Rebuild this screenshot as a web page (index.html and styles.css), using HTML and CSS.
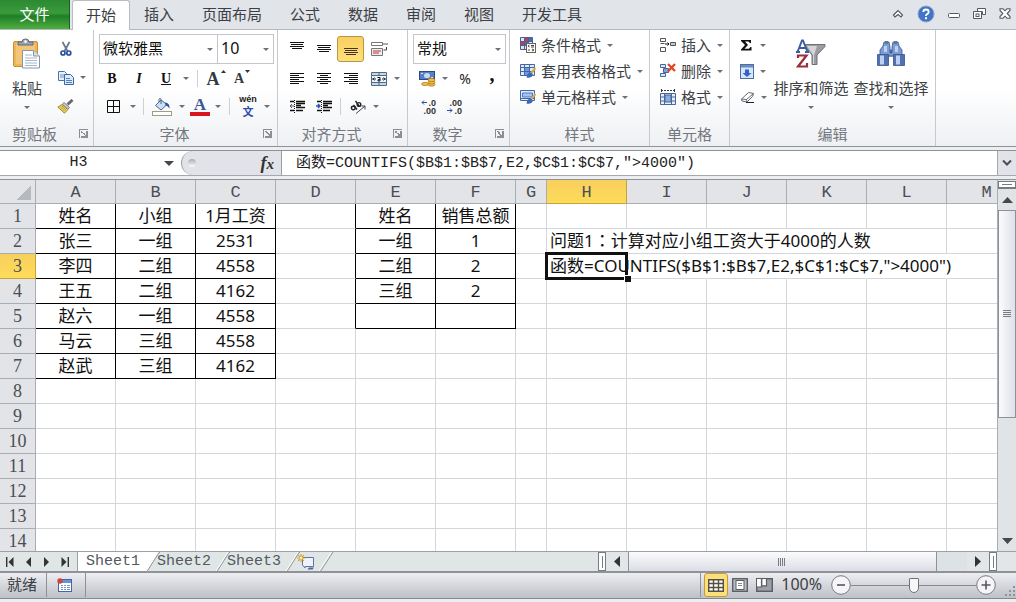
FILE: index.html
```html
<!DOCTYPE html>
<html lang="zh-CN">
<head>
<meta charset="utf-8">
<title>工作簿</title>
<link rel="stylesheet" href="styles.css">
</head>
<body>
<nav class="tabs">
  <button class="file">文件</button>
  <button class="tab active">开始</button>
  <button class="tab">插入</button>
  <button class="tab">页面布局</button>
  <button class="tab">公式</button>
  <button class="tab">数据</button>
  <button class="tab">审阅</button>
  <button class="tab">视图</button>
  <button class="tab">开发工具</button>
  <div class="window-tools">
    <button aria-label="折叠功能区"><svg width="12" height="10" viewBox="0 0 12 10"><path d="M1.500 6 6 1.500 10.500 6 9 8 6 5.500 3 8Z" fill="#fff" stroke="#555a62" stroke-width="1.200"/></svg></button>
    <button aria-label="帮助"><svg width="18" height="18" viewBox="0 0 18 18"><circle cx="9" cy="9" r="8" fill="#4474c4" stroke="#8aa5d6" stroke-width="1"/><path d="M6.300 7Q6.300 4.500 9 4.500T11.700 7Q11.700 8.500 9.800 9.300 9 9.700 9 11" fill="none" stroke="#fff" stroke-width="1.800"/><rect x="8" y="12.200" width="2" height="2" fill="#fff"/></svg></button>
    <button aria-label="最小化"><svg width="12" height="12" viewBox="0 0 12 12"><rect x=".5" y="5.500" width="11" height="4" rx="1" fill="#fff" stroke="#555a62"/></svg></button>
    <button aria-label="还原"><svg width="13" height="12" viewBox="0 0 13 12"><path d="M4.500.5h8v6h-3v-3h-5Z" fill="#fff" stroke="#555a62"/><path d="M.5 3.500h8v7h-8Z" fill="#fff" stroke="#555a62"/><rect x="3" y="6" width="3" height="2.500" fill="#fff" stroke="#555a62"/></svg></button>
    <button aria-label="关闭"><svg width="12" height="11" viewBox="0 0 12 11"><path d="M1 .8h3l2 2 2-2h3v1.700L8.200 5.500 11 8.500v1.700H8l-2-2-2 2H1V8.500l2.800-3L1 2.500Z" fill="#fff" stroke="#555a62" stroke-width="1.100"/></svg></button>
  </div>
</nav>

<section class="ribbon">
  <div class="group">
    <div class="body columns clip">
      <button class="big">
        <svg width="30" height="32" viewBox="0 0 30 32"><rect x="1.500" y="3.500" width="24" height="25" rx="1.500" fill="#eab55c" stroke="#c98f35"/><path d="M4 5h19v21H4Z" fill="#f3c577"/><path d="M6 7V4h4q0-3 3.500-3T17 4h4v3Z" fill="#9aa4b5" stroke="#5d6878"/><circle cx="13.500" cy="3.600" r="1.300" fill="#fff"/><path d="M10.500 12.500h11l6 5.500v12h-17Z" fill="#fff" stroke="#8795ab"/><path d="M21.500 12.500V18h6" fill="#d6dfed" stroke="#8795ab"/><path d="M13 17h7M13 20h12M13 22.500h12M13 25h12M13 27.500h12" stroke="#a9b6c9"/></svg>
        <span>粘贴</span><i class="arrow"></i>
      </button>
      <div class="stack">
        <button class="icon" aria-label="剪切"><svg width="12" height="16" viewBox="0 0 12 16"><path d="M2.500 1 7.500 10M9.500 1 4.500 10" stroke="#61788f" stroke-width="1.700"/><circle cx="3" cy="12" r="2" fill="none" stroke="#2a4fa0" stroke-width="1.700"/><circle cx="8.800" cy="12" r="2" fill="none" stroke="#2a4fa0" stroke-width="1.700"/></svg></button>
        <button class="icon" aria-label="复制"><svg width="16" height="14" viewBox="0 0 16 14"><path d="M.5.5h6l2 2v7h-8Z" fill="#e7f0fb" stroke="#4e74ad"/><path d="M2 4h4M2 6h4" stroke="#6a92cc"/><path d="M6.500 3.500h6l3 3v7h-9Z" fill="#dceafa" stroke="#3c64a3"/><path d="M8 7.500h4M8 9.500h6M8 11.500h6" stroke="#4e7fc5"/></svg></button>
        <button class="icon" aria-label="格式刷"><svg width="17" height="15" viewBox="0 0 17 15"><path d="m15.500 1-5 4.500" stroke="#6c6670" stroke-width="3"/><path d="m7 3.500 5.500 5-1.700 1.700-5.500-5Z" fill="#c9ced6" stroke="#596274" stroke-width=".8"/><path d="M5 5.500.8 8l6.700 6.200L11 10.500Z" fill="#e8d267" stroke="#a58a2a"/><path d="m3.500 8 4 4M5 7l4 4" stroke="#a58a2a" stroke-width=".7"/></svg></button>
      </div>
      <i class="arrow"></i>
    </div>
    <footer>剪贴板<button class="launcher" aria-label="剪贴板选项"></button></footer>
  </div>

  <div class="group">
    <div class="body rows">
      <div class="line tall">
        <span class="combo font-name"><select aria-label="字体"><option>微软雅黑</option></select></span>
        <span class="combo font-size"><select aria-label="字号"><option>10</option></select></span>
      </div>
      <div class="line">
        <button class="w26 letter"><b>B</b></button>
        <button class="w28 letter"><em>I</em></button>
        <button class="w26 letter"><u>U</u></button>
        <i class="arrow w14"></i><i class="sep w8"></i>
        <button class="w30 grow"><span>A</span><svg width="5" height="4" viewBox="0 0 5 4"><path d="M0 3 2.500 0 5 3Z" fill="#334"/></svg></button>
        <button class="w22 grow small"><span>A</span><svg width="5" height="4" viewBox="0 0 5 4"><path d="M0 0h5L2.500 3Z" fill="#334"/></svg></button>
      </div>
      <div class="line">
        <button class="w28" aria-label="边框"><svg width="13" height="13" viewBox="0 0 13 13"><path d="M.5.5h12v12H.5ZM6.500 0v13M0 6.500h13" fill="none" stroke="#111"/></svg></button>
        <i class="arrow w12"></i><i class="sep w8"></i>
        <button class="w30" aria-label="填充颜色"><svg width="20" height="18" viewBox="0 0 20 18"><path d="M9 2 3.500 7.500 9 12l6-5.500Z" fill="#cfdff2" stroke="#46648f"/><path d="M9 6V1.500Q9 .5 8 .5T7 1.500V4" fill="none" stroke="#46648f"/><path d="M13 4.500q5 .5 4.500 6-2-3-4-3Z" fill="#2854a5"/><rect x=".5" y="13.500" width="19" height="4" fill="#fff" stroke="#a09c80"/></svg></button>
        <i class="arrow w10"></i>
        <button class="w26 color-a" aria-label="字体颜色"><span>A</span></button>
        <i class="arrow w10"></i><i class="sep w12"></i>
        <button class="w26 pinyin"><span>wén</span><span>文</span></button>
        <i class="arrow w12"></i>
      </div>
    </div>
    <footer>字体<button class="launcher" aria-label="字体选项"></button></footer>
  </div>

  <div class="group">
    <div class="body rows align">
      <div class="line tall">
        <button class="w27" aria-label="顶端对齐"><svg width="14" height="14" viewBox="0 0 14 14"><path d="M0 .5h14M1 2.500h12M0 4.500h14M2 6.500h10" stroke="#111"/></svg></button>
        <button class="w27" aria-label="垂直居中"><svg width="14" height="14" viewBox="0 0 14 14"><path d="M0 3.500h14M1 5.500h12M0 7.500h14M2 9.500h10" stroke="#111"/></svg></button>
        <button class="w27 pressed" aria-label="底端对齐"><svg width="14" height="14" viewBox="0 0 14 14"><path d="M0 6.500h14M1 8.500h12M0 10.500h14M2 12.500h10" stroke="#432"/></svg></button>
        <button class="w30" aria-label="自动换行"><svg width="17" height="16" viewBox="0 0 17 16"><path d="M.5 1.500h11v3H.5Z" fill="#fff" stroke="#777"/><path d="M12 3h5" stroke="#555"/><path d="M.5 7.500h11v7H.5Z" fill="#eee" stroke="#777"/><path d="M2 10h8M2 12h6" stroke="#b33"/><path d="M15.500 6v3h-3" fill="none" stroke="#345"/></svg></button>
      </div>
      <div class="line">
        <button class="w27" aria-label="左对齐"><svg width="14" height="12" viewBox="0 0 14 12"><path d="M0 .5h14M0 2.500h9M0 4.500h14M0 6.500h9M0 8.500h14M0 10.500h9" stroke="#111"/></svg></button>
        <button class="w27" aria-label="居中"><svg width="14" height="12" viewBox="0 0 14 12"><path d="M0 .5h14M3 2.500h8M0 4.500h14M3 6.500h8M0 8.500h14M3 10.500h8" stroke="#111"/></svg></button>
        <button class="w27" aria-label="右对齐"><svg width="14" height="12" viewBox="0 0 14 12"><path d="M0 .5h14M5 2.500h9M0 4.500h14M5 6.500h9M0 8.500h14M5 10.500h9" stroke="#111"/></svg></button>
        <button class="w30" aria-label="合并后居中"><svg width="16" height="14" viewBox="0 0 16 14"><path d="M.5.5h15v13H.5ZM8 0v3.500M8 10.500V14" fill="#c8d7e6" stroke="#4f6b84"/><path d="M.5 3.500h15v7H.5Z" fill="#eef5fc" stroke="#4f6b84"/><path d="M1 7h4M3.500 5.500 2 7l1.500 1.500M15 7h-4M12.500 5.500 14 7l-1.500 1.500" fill="none" stroke="#234"/><path d="M6.500 5.500h2.500v3.500H7q-1-1.500 2-1.700" fill="none" stroke="#111"/></svg></button>
        <i class="arrow w6"></i>
      </div>
      <div class="line">
        <button class="w27" aria-label="减少缩进"><svg width="16" height="13" viewBox="0 0 16 13"><path d="M1 1.500h4M7 1.500h9M7 3.500h9M7 5.500h5M7 7.500h9M1 10.500h4M7 10.500h7" stroke="#111" stroke-width="1.300"/><path d="M5.500 0v13" stroke="#111" stroke-dasharray="1 1"/><path d="M5 6H1M3 4 1 6l2 2" fill="none" stroke="#557"/></svg></button>
        <button class="w27" aria-label="增加缩进"><svg width="16" height="13" viewBox="0 0 16 13"><path d="M1 1.500h4M7 1.500h9M7 3.500h9M7 5.500h5M7 7.500h9M1 10.500h4M7 10.500h7" stroke="#111" stroke-width="1.300"/><path d="M5.500 0v13" stroke="#111" stroke-dasharray="1 1"/><path d="M0 6h4M2 4l2 2-2 2" fill="none" stroke="#2a50c0" stroke-width="1.400"/></svg></button>
        <i class="sep w6"></i>
        <button class="w30" aria-label="方向"><svg width="16" height="14" viewBox="0 0 16 14"><path d="M6 13.500 15 6M11.500 6H15v3.500" fill="none" stroke="#445"/><g fill="none" stroke="#222" stroke-width="1.400"><ellipse cx="3.300" cy="8" rx="1.900" ry="1.700"/><path d="m3.500 5 3.500 4.500M5.500 1l4 5.500"/><ellipse cx="9" cy="4.500" rx="1.800" ry="1.900"/></g></svg></button>
        <i class="arrow w6"></i>
      </div>
    </div>
    <footer>对齐方式<button class="launcher" aria-label="对齐选项"></button></footer>
  </div>

  <div class="group">
    <div class="body rows">
      <div class="line tall"><span class="combo number-format"><select aria-label="数字格式"><option>常规</option></select></span></div>
      <div class="line">
        <button class="w28" aria-label="会计数字格式"><svg width="17" height="16" viewBox="0 0 17 16"><rect x=".5" y=".5" width="15" height="8" fill="#5580c4" stroke="#2c4b86"/><ellipse cx="8" cy="4.500" rx="3" ry="2.600" fill="#c7d9f3"/><path d="M2 2.500h2M12 6.500h2" stroke="#dce8fa"/><g fill="#f2bd3e" stroke="#a8741c" stroke-width=".7"><ellipse cx="6" cy="13" rx="3.500" ry="1.600"/><ellipse cx="12.500" cy="13.500" rx="3.500" ry="1.700"/><ellipse cx="12.500" cy="11.300" rx="3.500" ry="1.700"/><ellipse cx="12.500" cy="9" rx="3.500" ry="1.700"/></g></svg></button>
        <i class="arrow w8"></i>
        <button class="w32 percent">%</button>
        <button class="w22 comma">,</button>
      </div>
      <div class="line">
        <button class="w28 decimals"><span><svg width="6" height="5" viewBox="0 0 6 5"><path d="M6 2.500H1M3 .5l-2 2 2 2" fill="none" stroke="#2b4fa3"/></svg>.0</span><span>.00</span></button>
        <button class="w26 decimals"><span>.00</span><span><svg width="6" height="5" viewBox="0 0 6 5"><path d="M0 2.500h5M3 .5l2 2-2 2" fill="none" stroke="#2b4fa3"/></svg>.0</span></button>
      </div>
    </div>
    <footer>数字<button class="launcher" aria-label="数字选项"></button></footer>
  </div>

  <div class="group plain">
    <div class="body list">
      <button><svg width="16" height="16" viewBox="0 0 16 16"><path d="M.5.5h12v12H.5ZM.5 4.500h12M.5 8.500h12M4.500.5v12M8.500.5v12" fill="#dfe6f3" stroke="#4d5f8c"/><path d="M5 1h3v3H5ZM1 5h3v3H1Z" fill="#b8405a"/><path d="M9 1h3v3H9ZM5 5h3v3H5Z" fill="#4a69b8"/><rect x="6.500" y="6.500" width="9" height="9" fill="#fff" stroke="#665"/><path d="m9.500 8-1.500 1 1.500 1M11 8.500h3M11 10h3M8 13h2M12 12l2 1-2 1" fill="none" stroke="#444"/></svg>条件格式<i class="arrow"></i></button>
      <button><svg width="16" height="16" viewBox="0 0 16 16"><path d="M.5 1.500h14v11H.5Z" fill="#dfeaf9" stroke="#4566a2"/><path d="M5 5h5v7H5Z" fill="#6a9be0"/><path d="M.5 4.500h14M.5 8.500h14M4.500 1v12M9.500 1v12" stroke="#4566a2"/><path d="m15.500 5-5 6" stroke="#e0a73c" stroke-width="2"/><path d="M11 9.500q-4 0-4.500 5 5 1 6.500-3Z" fill="#3868bc"/></svg>套用表格格式<i class="arrow"></i></button>
      <button><svg width="16" height="16" viewBox="0 0 16 16"><path d="M.5 1.500h14v10H.5Z" fill="#dfeaf9" stroke="#4566a2"/><path d="M2.500 4h10v4h-10Z" fill="#a7c4ef" stroke="#4978c4"/><path d="M.5 9.500h14" stroke="#4566a2"/><path d="m15.500 5-5 6" stroke="#e0a73c" stroke-width="2"/><path d="M11 9.500q-4 0-4.500 5 5 1 6.500-3Z" fill="#3868bc"/></svg>单元格样式<i class="arrow"></i></button>
    </div>
    <footer>样式</footer>
  </div>

  <div class="group plain">
    <div class="body list">
      <button><svg width="16" height="16" viewBox="0 0 16 16"><g fill="#fff" stroke="#555"><path d="M.5 1.500h5v3h-5ZM.5 10.500h5v4h-5ZM.5 6.500h4"/><path d="M10.500 5.500h5v3h-5Z" fill="#bcd"/></g><path d="M5 7h4M7.500 5.500 9 7 7.500 8.500" fill="none" stroke="#111"/></svg>插入<i class="arrow"></i></button>
      <button><svg width="16" height="16" viewBox="0 0 16 16"><g fill="#dbe7f8" stroke="#46679e"><path d="M.5 1.500h5v3h-5ZM.5 10.500h5v3h-5Z"/><path d="M3.500 5.500h5v4h-5Z" fill="#7fa5dc"/></g><path d="m8 1 7 7M15 1 8 8.500" stroke="#e04324" stroke-width="2.200"/></svg>删除<i class="arrow"></i></button>
      <button><svg width="16" height="16" viewBox="0 0 16 16"><path d="M.5 4.500h15v11H.5ZM.5 8h15M.5 12h15M4.500 4v12M11.500 4v12" fill="#e8eef8" stroke="#4b6697"/><path d="M5 6h6v7H5Z" fill="#87ade3" stroke="#4b6697"/><path d="M1 1.500h14" stroke="#333" stroke-dasharray="2 1"/><path d="M1.500 0v3M14.500 0v3" stroke="#333"/></svg>格式<i class="arrow"></i></button>
    </div>
    <footer>单元格</footer>
  </div>

  <div class="group plain">
    <div class="body columns editing">
      <div class="list edit-list">
        <button aria-label="自动求和"><svg width="14" height="14" viewBox="0 0 14 14"><path d="M1 2h10v3h-1L8.500 3.500H5L8 7l-3.500 3.700H9L10.500 9h1v3.500H1v-1L5 7 1 3Z" fill="#111"/></svg><i class="arrow"></i></button>
        <button aria-label="填充"><svg width="14" height="15" viewBox="0 0 14 15"><rect x=".5" y=".5" width="13" height="14" fill="#d8e5f7" stroke="#4e6f9f"/><path d="M1 1h12v2.500H1Z" fill="#6a8cc0"/><path d="M5 5.500h4v3.500h2.500L7 13 2.500 9H5Z" fill="#2f63c9"/></svg><i class="arrow"></i></button>
        <button aria-label="清除"><svg width="15" height="13" viewBox="0 0 15 13"><path d="m8.500 1.500 5 1-1 3-5.500 5.500-5-1L1.500 8Z" fill="#fff" stroke="#667"/><path d="m1.500 8 5 .5 7-6M6.500 8.500l.5 2.500" fill="none" stroke="#667"/><path d="M6 11.500h8" stroke="#223"/></svg><i class="arrow"></i></button>
      </div>
      <button class="big wide">
        <svg width="30" height="32" viewBox="0 0 30 32"><path d="M9.500 6.500h19.500v2L21 17v9.500h-5V17L9.500 9Z" fill="#9a9da1" stroke="#6d7074"/><path d="M11 8h10l-3 9v9h-1v-9Z" fill="#d4d6d8"/><path d="M1.500 14 6 2.500h1L11.500 14M3 10h7M0 14h4M9 14h4" fill="none" stroke="#3b5ca4" stroke-width="1.900"/><path d="M2 20v-2.500h8.500L2 28.500h9V25" fill="none" stroke="#9b2d3c" stroke-width="2.200"/></svg>
        <span>排序和筛选</span><i class="arrow"></i>
      </button>
      <button class="big wide">
        <svg width="30" height="32" viewBox="0 0 30 32"><g stroke="#3b5384" stroke-width=".8"><path d="M12 12h6v6h-6Z" fill="#5a78b4"/><path d="M8 4h5l1 5v6h2V9l1-5h5l1 4 3 4v6H4v-6l3-4Z" fill="#7c9cd6"/><path d="M1.500 16.500h11v11h-11ZM17.500 16.500h11v11h-11Z" fill="#4f72b4"/></g><path d="M9 3h3v3H9ZM18 3h3v3h-3Z" fill="#60779f"/><path d="M4 17.500h4v9H4ZM20 17.500h4v9h-4ZM8 8h3v6H8ZM19 8h3v6h-3Z" fill="#bdd0f2"/></svg>
        <span>查找和选择</span><i class="arrow"></i>
      </button>
    </div>
    <footer>编辑</footer>
  </div>
</section>

<section class="formula">
  <input class="name-box" aria-label="名称框" value="H3">
  <button class="name-arrow" aria-label="名称列表"></button>
  <div class="fx-area"><i class="knob"></i><button class="fx" aria-label="插入函数"><i>f</i><i>x</i></button></div>
  <input class="formula-input" aria-label="编辑栏" value="函数=COUNTIFS($B$1:$B$7,E2,$C$1:$C$7,&quot;&gt;4000&quot;)">
  <button class="expand" aria-label="展开编辑栏"><svg width="10" height="8" viewBox="0 0 10 8"><path d="m1 1.500 4 4 4-4" fill="none" stroke="#4a4e55" stroke-width="2"/></svg></button>
</section>

<main class="workspace">
  <div class="sheet">
    <table>
      <colgroup><col class="c-head"><col span="6"><col class="c-narrow"><col span="6"></colgroup>
      <thead><tr><th class="corner"></th><th>A</th><th>B</th><th>C</th><th>D</th><th>E</th><th>F</th><th>G</th><th class="hot">H</th><th>I</th><th>J</th><th>K</th><th>L</th><th>M</th></tr></thead>
      <tbody>
      <tr><th>1</th><td class="k">姓名</td><td class="k">小组</td><td class="k">1月工资</td><td class="kr"></td><td class="k">姓名</td><td class="k">销售总额</td><td></td><td></td><td></td><td></td><td></td><td></td><td></td></tr>
      <tr><th>2</th><td class="k">张三</td><td class="k">一组</td><td class="k">2531</td><td class="kr"></td><td class="k">一组</td><td class="k">1</td><td></td><td class="spill">问题1<span class="colon" lang="zh-TW">：</span>计算对应小组工资大于4000的人数</td><td class="open"></td><td class="open"></td><td class="open"></td><td></td><td></td></tr>
      <tr><th class="hot">3</th><td class="k">李四</td><td class="k">二组</td><td class="k">4558</td><td class="kr"></td><td class="k">二组</td><td class="k">2</td><td></td><td class="spill selected">函数=COUNTIFS($B$1:$B$7,E2,$C$1:$C$7,"&gt;4000")</td><td class="open"></td><td class="open"></td><td class="open"></td><td class="open"></td><td></td></tr>
      <tr><th>4</th><td class="k">王五</td><td class="k">二组</td><td class="k">4162</td><td class="kr"></td><td class="k">三组</td><td class="k">2</td><td></td><td></td><td></td><td></td><td></td><td></td><td></td></tr>
      <tr><th>5</th><td class="k">赵六</td><td class="k">一组</td><td class="k">4558</td><td class="kr"></td><td class="k"></td><td class="k"></td><td></td><td></td><td></td><td></td><td></td><td></td><td></td></tr>
      <tr><th>6</th><td class="k">马云</td><td class="k">三组</td><td class="k">4558</td><td></td><td></td><td></td><td></td><td></td><td></td><td></td><td></td><td></td><td></td></tr>
      <tr><th>7</th><td class="k">赵武</td><td class="k">三组</td><td class="k">4162</td><td></td><td></td><td></td><td></td><td></td><td></td><td></td><td></td><td></td><td></td></tr>
      <tr><th>8</th><td></td><td></td><td></td><td></td><td></td><td></td><td></td><td></td><td></td><td></td><td></td><td></td><td></td></tr>
      <tr><th>9</th><td></td><td></td><td></td><td></td><td></td><td></td><td></td><td></td><td></td><td></td><td></td><td></td><td></td></tr>
      <tr><th>10</th><td></td><td></td><td></td><td></td><td></td><td></td><td></td><td></td><td></td><td></td><td></td><td></td><td></td></tr>
      <tr><th>11</th><td></td><td></td><td></td><td></td><td></td><td></td><td></td><td></td><td></td><td></td><td></td><td></td><td></td></tr>
      <tr><th>12</th><td></td><td></td><td></td><td></td><td></td><td></td><td></td><td></td><td></td><td></td><td></td><td></td><td></td></tr>
      <tr><th>13</th><td></td><td></td><td></td><td></td><td></td><td></td><td></td><td></td><td></td><td></td><td></td><td></td><td></td></tr>
      <tr><th>14</th><td></td><td></td><td></td><td></td><td></td><td></td><td></td><td></td><td></td><td></td><td></td><td></td><td></td></tr>
      </tbody>
    </table>
  </div>
  <div class="vscroll">
    <i class="split"></i>
    <button aria-label="向上"><svg width="11" height="6" viewBox="0 0 11 6"><path d="M0 6 5.500 0 11 6Z" fill="#44474d"/></svg></button>
    <div class="vtrack"><div class="vthumb"><svg width="8" height="8" viewBox="0 0 8 8"><path d="M0 .5h8M0 2.500h8M0 4.500h8M0 6.500h8" stroke="#777b83"/></svg></div></div>
    <button aria-label="向下"><svg width="11" height="6" viewBox="0 0 11 6"><path d="M0 0h11L5.500 6Z" fill="#44474d"/></svg></button>
  </div>
</main>

<section class="bottom">
  <div class="sheet-tabs">
    <div class="nav">
      <button aria-label="第一张"><svg width="8" height="10" viewBox="0 0 8 10"><path d="M.7 0v10" stroke="#333" stroke-width="1.400"/><path d="M7.500 0v10L2.500 5Z" fill="#333"/></svg></button>
      <button aria-label="上一张"><svg width="5" height="10" viewBox="0 0 5 10"><path d="M5 0v10L0 5Z" fill="#333"/></svg></button>
      <button aria-label="下一张"><svg width="5" height="10" viewBox="0 0 5 10"><path d="M0 0v10l5-5Z" fill="#333"/></svg></button>
      <button aria-label="最后一张"><svg width="8" height="10" viewBox="0 0 8 10"><path d="M7.300 0v10" stroke="#333" stroke-width="1.400"/><path d="M.5 0v10l5-5Z" fill="#333"/></svg></button>
    </div>
    <button class="sheet-tab current">Sheet1</button>
    <svg class="slash" width="15" height="20" viewBox="0 0 15 20"><path d="M0 0h14L2 20H0Z" fill="#fff"/><path d="M15 .5h-1L2 19.500H0" fill="none" stroke="#8d9298"/></svg>
    <button class="sheet-tab">Sheet2</button>
    <svg class="slash" width="15" height="20" viewBox="0 0 15 20"><path d="M15 .5h-1L2 19.500H0" fill="none" stroke="#8d9298"/><path d="M13 0 1 19" stroke="#fff"/></svg>
    <button class="sheet-tab">Sheet3</button>
    <svg class="slash" width="15" height="20" viewBox="0 0 15 20"><path d="M15 .5h-1L2 19.500H0" fill="none" stroke="#8d9298"/><path d="M13 0 1 19" stroke="#fff"/></svg>
    <button class="new-sheet" aria-label="插入工作表"><svg width="18" height="16" viewBox="0 0 18 16"><path d="M5.500 3.500h11v9H8v1.500l-2.500-3Z" fill="#eef3fb" stroke="#5f76a5"/><path d="M12 13.500h5l-1.500 2h-5Z" fill="#52689a"/><path d="M4 0v8M0 4h8M1.200 1.200l5.600 5.600M6.800 1.200 1.200 6.800" stroke="#d59b2c" stroke-width="1.100"/><circle cx="4" cy="4" r="1.500" fill="#fff2a8"/></svg></button>
    <svg class="slash" width="15" height="20" viewBox="0 0 15 20"><path d="M14 0 1 20" stroke="#8d9298"/><path d="M12.500 0 0 19" stroke="#fff"/></svg>
  </div>
  <div class="hscroll">
    <i class="grab"></i>
    <button aria-label="向左"><svg width="6" height="11" viewBox="0 0 6 11"><path d="M6 0v11L0 5.500Z" fill="#333"/></svg></button>
    <div class="htrack"><div class="hthumb"><svg width="8" height="8" viewBox="0 0 8 8"><path d="M.5 0v8M2.500 0v8M4.500 0v8M6.500 0v8" stroke="#777b83"/></svg></div></div>
    <button aria-label="向右"><svg width="6" height="11" viewBox="0 0 6 11"><path d="M0 0v11l6-5.500Z" fill="#333"/></svg></button>
    <i class="grab"></i>
  </div>
</section>

<footer class="status">
  <span class="ready">就绪</span>
  <button class="macro" aria-label="录制宏"><svg width="16" height="14" viewBox="0 0 16 14"><rect x="1.500" y="1.500" width="13" height="12" fill="#fff" stroke="#4465ac"/><path d="M2 2h12v3H2Z" fill="#6d8fd4"/><path d="M4 7.500h2M7 7.500h2M10 7.500h3M4 9.500h2M7 9.500h2M10 9.500h3M4 11.500h2M7 11.500h2M10 11.500h3" stroke="#7a94c8"/><circle cx="3" cy="3" r="2.700" fill="#c8493d"/></svg></button>
  <span class="space"></span>
  <button class="view on" aria-label="普通"><svg width="16" height="13" viewBox="0 0 16 13"><path d="M.7.7h14.600v11.600H.7ZM.7 4.500h14.600M.7 8.500h14.600M5.500.7v11.600M10.500.7v11.600" fill="#fff" stroke="#55503f" stroke-width="1.400"/></svg></button>
  <button class="view" aria-label="页面布局"><svg width="16" height="14" viewBox="0 0 16 14"><rect x=".7" y=".7" width="14.600" height="12.600" fill="#b9bcc2" stroke="#5b5e64" stroke-width="1.400"/><rect x="4" y="2.500" width="8" height="9" fill="#fff" stroke="#5b5e64"/><path d="M6 5.500h4M6 7.500h4" stroke="#888"/></svg></button>
  <button class="view" aria-label="分页预览"><svg width="17" height="14" viewBox="0 0 17 14"><rect x=".7" y=".7" width="15.600" height="12.600" fill="#9c9fa6" stroke="#5b5e64" stroke-width="1.400"/><path d="M1 1h4v8H1ZM6.500 1h4v6h-4Z" fill="#fff"/><path d="M5.500 1v8H1M10.500 1v7h-5" fill="none" stroke="#5b5e64" stroke-width="1.200"/></svg></button>
  <button class="percent-label">100%</button>
  <button class="round" aria-label="缩小"><svg width="20" height="20" viewBox="0 0 20 20"><circle cx="10" cy="10" r="9.300" fill="#f5f5f7" stroke="#777a80"/><path d="M6 10h8" stroke="#55585e" stroke-width="1.600"/></svg></button>
  <input class="zoom" type="range" aria-label="显示比例" min="0" max="100" value="50">
  <button class="round" aria-label="放大"><svg width="20" height="20" viewBox="0 0 20 20"><circle cx="10" cy="10" r="9.300" fill="#f5f5f7" stroke="#777a80"/><path d="M5.500 10h9M10 5.500v9" stroke="#55585e" stroke-width="1.600"/></svg></button>
  <svg class="grip" width="12" height="12" viewBox="0 0 12 12"><path d="M9 1h2v2H9ZM5 5h2v2H5ZM9 5h2v2H9ZM1 9h2v2H1ZM5 9h2v2H5ZM9 9h2v2H9Z" fill="#8e9197"/></svg>
</footer>
</body>
</html>
```
FILE: styles.css
```css
* { box-sizing: border-box; }

body {
  margin: 0;
  height: 100vh;
  display: flex;
  flex-direction: column;
  overflow: hidden;
  background: #eceef0;
  color: #3c3f45;
  font: 15px/20px "Noto Sans", "Noto Sans CJK SC", sans-serif;
}

button, select, input {
  margin: 0;
  padding: 0;
  border: 0;
  border-radius: 0;
  background: none;
  color: inherit;
  font: inherit;
}

svg { display: block; flex: none; }

/* Ribbon tabs */
.tabs {
  display: flex;
  flex: none;
  height: 30px;
  background: #e1e4e8;
  border-bottom: 1px solid #b4b8be;
}
.tabs > button { padding-bottom: 2px; }
.file {
  width: 70px;
  margin-right: 2px;
  color: #fff;
  background: linear-gradient(#2c8a32, #3a9b3c 45%, #1f7d27 55%, #4fae3f);
  border-right: 1px solid #17631f;
}
.tab { padding: 0 14px; }
.active {
  padding: 0 13px;
  height: 30px;
  background: #fff;
  border: 1px solid #b9bdc3;
  border-bottom: 0;
  border-radius: 3px 3px 0 0;
}
.window-tools {
  display: flex;
  align-items: center;
  gap: 13px;
  height: 27px;
  margin-left: auto;
  padding-right: 5px;
}

/* Ribbon */
.ribbon {
  display: flex;
  flex: none;
  height: 117px;
  background: linear-gradient(#fff 50%, #eef0f3);
  border-bottom: 1px solid #8f9399;
}
.group {
  display: flex;
  flex-direction: column;
  border-right: 1px solid #c6c9ce;
}
.body { flex: 1; }
.group footer {
  position: relative;
  height: 24px;
  line-height: 24px;
  text-align: center;
  color: #74777d;
  padding-right: 22px;
}
.group.plain footer { padding-right: 0; }
.launcher {
  position: absolute;
  right: 5px;
  top: 7px;
  width: 9px;
  height: 9px;
  border-left: 1px solid #8b8e94;
  border-top: 1px solid #8b8e94;
}
.launcher::after {
  content: "";
  position: absolute;
  right: 0;
  bottom: 0;
  width: 5px;
  height: 5px;
  border-right: 2px solid #8b8e94;
  border-bottom: 2px solid #8b8e94;
  background: linear-gradient(45deg, transparent 40%, #8b8e94 40% 60%, transparent 60%);
}
.columns { display: flex; }
.rows {
  display: flex;
  flex-direction: column;
  gap: 1px;
  padding: 4px 3px 0 5px;
}
.align { padding: 4px 7px 0 5px; }
.line { display: flex; align-items: center; height: 27px; }
.tall { height: 30px; }
.line button {
  display: flex;
  align-items: center;
  justify-content: center;
  height: 26px;
}

.arrow {
  display: flex;
  justify-content: center;
  flex: none;
}
.arrow::after {
  content: "";
  border: 3px solid transparent;
  border-top-color: #6d7076;
  border-bottom: 0;
}
.sep { display: flex; justify-content: center; flex: none; }
.sep::after { content: ""; width: 1px; height: 17px; background: #cdd0d4; }

.w6 { width: 6px; }
.w8 { width: 8px; }
.w10 { width: 10px; }
.w12 { width: 12px; }
.w14 { width: 14px; }
.w22 { width: 22px; }
.w26 { width: 26px; }
.w27 { width: 27px; }
.w28 { width: 28px; }
.w30 { width: 30px; }
.w32 { width: 32px; }

.clip { width: 93px; padding-left: 6px; }
.clip + footer { padding-right: 24px; }
.big {
  display: flex;
  flex-direction: column;
  align-items: center;
  width: 42px;
  padding-top: 8px;
}
.big span { margin: 8px 0 8px; white-space: nowrap; }
.wide { width: 80px; }
.stack { display: flex; flex-direction: column; padding-top: 4px; width: 35px; }
.icon { display: flex; align-items: center; justify-content: center; height: 29px; }
.clip > .arrow { padding-top: 46px; margin-left: -3px; }

.combo {
  position: relative;
  height: 30px;
  border: 1px solid #c3c6cb;
  background: #fff;
}
.combo + .combo { border-left: 0; }
.combo select {
  width: 100%;
  height: 25px;
  padding-left: 3px;
  appearance: none;
  color: #111;
  line-height: 24px;
}
.combo::after {
  content: "";
  position: absolute;
  right: 4px;
  top: 13px;
  border: 3px solid transparent;
  border-top-color: #6d7076;
  border-bottom: 0;
}
.font-name { width: 119px; }
.font-size { width: 56px; }
.font-size select { font-size: 16px; }
.number-format { width: 93px; }

.letter { font: bold 14px/20px "Liberation Serif", serif; color: #111; }
.grow { gap: 1px; font: bold 18px/20px "Liberation Serif", serif; color: #333a46; }
.grow svg { align-self: flex-start; margin-top: 4px; }
.small { font-size: 14px; }
.line .color-a { flex-direction: column; }
.color-a span {
  width: 20px;
  border-bottom: 4px solid #d8151c;
  font: bold 17px/15px "Liberation Serif", serif;
  color: #3c5594;
}
.line .pinyin { flex-direction: column; justify-content: flex-start; }
.pinyin span { font: bold 9px/11px "Liberation Sans", sans-serif; color: #222; }
.pinyin span + span { font: bold 11px/13px "Noto Sans CJK SC", sans-serif; color: #2f4fae; }
.pressed {
  border: 1px solid #b8954a;
  border-radius: 3px;
  background: linear-gradient(#f8cf61, #fde07a);
}
.percent { font: 14px/20px "Noto Sans", sans-serif; color: #222; }
.line .comma { padding-bottom: 9px; font: bold 20px/16px "Liberation Serif", serif; color: #111; }
.line .decimals { flex-direction: column; align-items: stretch; padding-right: 5px; }
.decimals span {
  display: flex;
  align-items: center;
  justify-content: flex-end;
  gap: 1px;
  font: bold 9px/8px "Liberation Sans", sans-serif;
  color: #333;
}

.list { display: flex; flex-direction: column; padding: 2px 6px 0 10px; }
.list button { display: flex; align-items: center; gap: 5px; height: 26px; white-space: nowrap; }
.list .arrow { margin-left: 1px; }
.editing { padding-right: 4px; }
.edit-list { width: 41px; padding-right: 0; }

/* Formula bar */
.formula {
  display: flex;
  flex: none;
  height: 26px;
  margin: 3px 0;
  background: #fff;
  border-top: 1px solid #8f9399;
  border-bottom: 1px solid #a5a8ae;
}
.name-box { width: 157px; text-align: center; font: 15px/24px "Liberation Mono", monospace; color: #222; }
.name-arrow { display: flex; align-items: center; justify-content: center; width: 24px; }
.name-arrow::after { content: ""; border: 5px solid transparent; border-top-color: #44474d; border-bottom: 0; }
.fx-area {
  display: flex;
  align-items: center;
  justify-content: space-between;
  width: 101px;
  padding: 0 7px 0 6px;
  background: #e1e3e8;
  border-left: 1px solid #9b9ea5;
  border-right: 1px solid #9b9ea5;
  border-radius: 12px 0 0 12px;
}
.knob { width: 8px; height: 8px; border-radius: 4px; background: linear-gradient(#a7aab0, #fff); }
.fx { font: bold italic 18px/20px "Liberation Serif", serif; color: #333; }
.fx i + i { font-size: 15px; }
.formula-input {
  flex: 1;
  min-width: 0;
  padding: 2px 0 0 14px;
  font: 15px/22px "Liberation Mono", "Noto Sans CJK SC", monospace;
  color: #222;
}
.expand {
  display: flex;
  align-items: center;
  justify-content: center;
  width: 19px;
  background: #e1e3e8;
  border-left: 1px solid #a5a8ae;
}

/* Grid */
.workspace { display: flex; flex: 1; min-height: 0; border-top: 1px solid #8f9399; }
.sheet { flex: 1; min-width: 0; overflow: hidden; background: #fff; }
table { width: 1027px; table-layout: fixed; border-collapse: separate; border-spacing: 0; }
col { width: 80px; }
.c-head { width: 36px; }
.c-narrow { width: 31px; }
th, td {
  height: 25px;
  padding: 0;
  line-height: 24px;
  border-right: 1px solid #d3d6db;
  border-bottom: 1px solid #d3d6db;
}
th {
  background: #e2e4e8;
  border-color: #a9adb4;
  color: #4b4e54;
  font: 18px/22px "Liberation Serif", serif;
}
thead th { height: 24px; padding-top: 2px; font: 17px/21px "Liberation Mono", monospace; }
tbody th { line-height: 24px; }
td { font-size: 17px; color: #111; text-align: center; white-space: nowrap; }
.corner { background: linear-gradient(135deg, transparent 50%, #b5b9c0 50%) 17px 6px / 14px 14px no-repeat #e2e4e8; }
th.hot { background: linear-gradient(#f8cf5e, #fddc58); border-color: #c9a240; }
.k { border-color: #000; }
.kr { border-right-color: #000; }
.spill { text-align: left; padding-left: 3px; border-right-color: transparent; }
.open { border-right-color: transparent; }
.colon { font-family: "Noto Sans CJK TC", sans-serif; line-height: 16px; }
.selected { position: relative; }
.selected::before {
  content: "";
  position: absolute;
  inset: -2px;
  border: 3px solid #111;
}
.selected::after {
  content: "";
  position: absolute;
  right: -5px;
  bottom: -4px;
  width: 6px;
  height: 6px;
  background: #111;
  border-left: 1px solid #fff;
  border-top: 1px solid #fff;
}

.vscroll {
  display: flex;
  flex-direction: column;
  width: 19px;
  background: #e0e4e6;
  border-left: 1px solid #a9adb4;
}
.split { height: 8px; margin-top: 1px; border: 2px solid #777b82; border-width: 1px 1px 2px; background: linear-gradient(#777b82, #777b82) 50% 2px / 10px 1px no-repeat #fff; }
.vscroll button { display: flex; align-items: center; justify-content: center; height: 21px; }
.vtrack { flex: 1; }
.vthumb {
  display: flex;
  align-items: center;
  justify-content: center;
  height: 65%;
  border: 1px solid #8d9199;
  background: linear-gradient(90deg, #fbfbfc, #dfe1e7);
}

/* Sheet tabs and horizontal scroll bar */
.bottom {
  display: flex;
  flex: none;
  height: 22px;
  background: #dfe6e5;
  border-top: 1px solid #9da1a7;
  border-bottom: 2px solid #8f9399;
}
.sheet-tabs { display: flex; flex: 3; min-width: 0; }
.nav {
  display: flex;
  justify-content: space-between;
  align-items: center;
  width: 78px;
  padding: 0 8px 0 6px;
  border-right: 1px solid #9da1a7;
}
.sheet-tab {
  width: 58px;
  text-align: left;
  font: 15px/18px "Liberation Mono", monospace;
  color: #55585e;
}
.current { width: 67px; padding-left: 8px; background: #fff; }
.slash { margin-right: -3px; }
.new-sheet { width: 22px; }
.hscroll { display: flex; flex: 2; min-width: 0; padding-right: 19px; background: #e3e6e8; }
.hscroll button { display: flex; align-items: center; justify-content: center; width: 22px; }
.grab { width: 8px; border: 1px solid #777b82; background: linear-gradient(#777b82, #777b82) 50% 50% / 1px 12px no-repeat #fff; }
.htrack { flex: 1; background: #dde3e4; }
.hthumb {
  display: flex;
  align-items: center;
  justify-content: center;
  width: 91%;
  height: 100%;
  border: 1px solid #8d9199;
  border-width: 0 1px;
  background: linear-gradient(#fbfbfc, #dcdee6);
}

/* Status bar */
.status {
  display: flex;
  align-items: center;
  flex: none;
  height: 26px;
  margin-bottom: 3px;
  padding-bottom: 1px;
  background: linear-gradient(#eeeef1, #d0d2d8 60%, #bfc1c8);
  border-bottom: 1px solid #85888e;
}
.ready { width: 47px; height: 24px; padding-left: 7px; line-height: 22px; border-right: 1px solid #8d9096; }
.macro { width: 39px; height: 24px; padding-left: 10px; border-right: 1px solid #8d9096; }
.space { flex: 1; height: 24px; margin-right: 3px; border-right: 1px solid #8d9096; }
.view { display: flex; align-items: center; justify-content: center; width: 24px; height: 24px; }
.on { background: #fbdf7b; border: 1px solid #c39b3a; border-radius: 3px; }
.percent-label { width: 54px; height: 24px; font-size: 16px; line-height: 22px; text-align: right; padding: 0 8px 2px 0; margin-right: 1px; }
.round { width: 20px; height: 20px; }
.zoom {
  width: 125px;
  height: 20px;
  appearance: none;
  background: linear-gradient(#85888e, #85888e) 0 10px / 100% 1px no-repeat;
}
.zoom::-webkit-slider-thumb {
  appearance: none;
  width: 10px;
  height: 15px;
  border: 1px solid #6f7278;
  border-radius: 1px 1px 5px 5px;
  background: #f7f7f9;
}
.grip { align-self: flex-end; margin-left: 8px; }
```
